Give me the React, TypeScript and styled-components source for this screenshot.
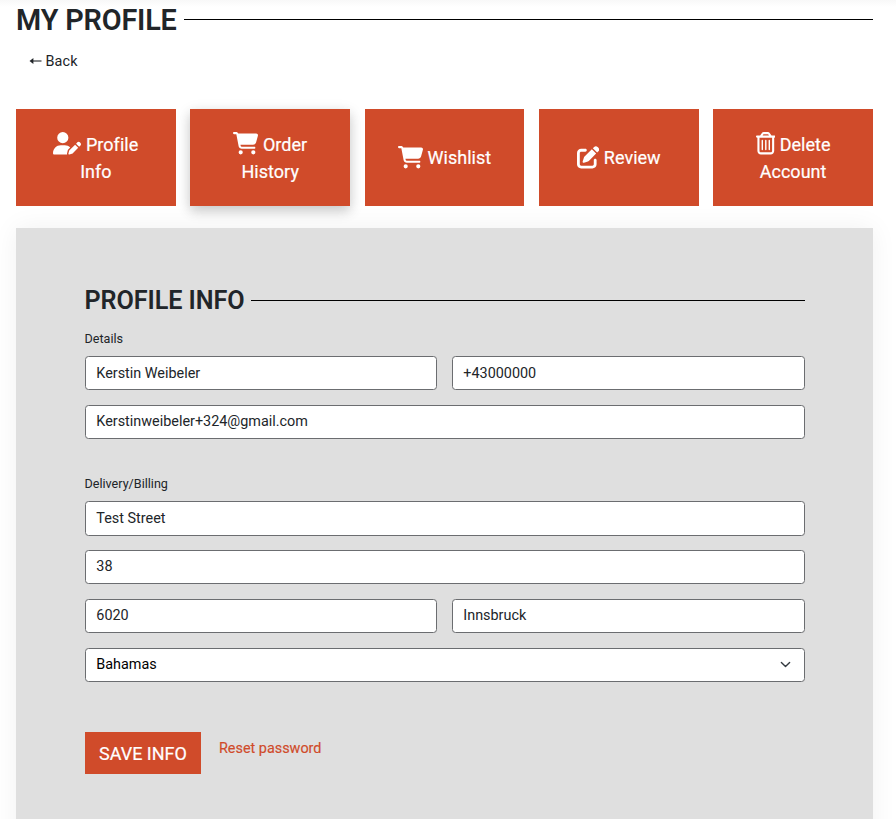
import React from "react";
import styled, { createGlobalStyle, css } from "styled-components";
import {
  FaUserPen,
  FaCartShopping,
  FaPenToSquare,
  FaRegTrashCan,
} from "react-icons/fa6";

const GlobalStyle = createGlobalStyle`
  *, *::before, *::after { box-sizing: border-box; }
  body {
    margin: 0;
    height: 819px;
    overflow: hidden;
    background: #fff;
    color: #212529;
    font-family: Roboto, "Liberation Sans", sans-serif;
    font-size: 14.4px;
    line-height: 1.5;
  }
`;

const Page = styled.main`
  height: 819px;
  padding: 0 23px 0 16px;
  overflow: hidden;
  background: linear-gradient(#f8f8f8, #fff 7px);
`;

const Heading = styled.div<{ $large?: boolean }>`
  display: flex;
  align-items: center;
  gap: 7px;
  height: ${(p) => (p.$large ? 39 : 38)}px;

  &::after {
    content: "";
    flex: 1;
    height: 1px;
    background: #000;
  }
`;

const Title = styled.h1`
  margin: 0;
  padding-top: 2px;
  width: 161px;
  font-size: 28.8px;
  font-weight: 600;
  line-height: 39px;
  letter-spacing: -0.15px;
  white-space: nowrap;
`;

const Subtitle = styled.h2`
  margin: 0 0 0 -0.5px;
  padding-top: 2px;
  width: 159.5px;
  font-size: 25.2px;
  font-weight: 600;
  line-height: 38px;
  letter-spacing: -0.08px;
  white-space: nowrap;
`;

const BackLink = styled.a`
  display: flex;
  align-items: center;
  gap: 4px;
  width: max-content;
  height: 22px;
  margin: 12px 0 36px 12.5px;
  color: #212529;
  letter-spacing: 0.1px;
  cursor: pointer;

  svg {
    display: block;
    margin-bottom: 2px;
  }
`;

const Tabs = styled.nav`
  display: grid;
  grid-template-columns: repeat(5, 1fr);
  gap: 14.5px;
  height: 97px;
`;

const Tab = styled.button<{
  $raised?: boolean;
  $iconWidth: number;
  $iconDrop: number;
}>`
  padding: 0 30px;
  border: 0;
  background: #d04b2a;
  color: #fff;
  font: 400 18px/27px Roboto, sans-serif;
  letter-spacing: 0.03px;
  -webkit-text-stroke: 0.2px #fff;
  text-align: center;
  cursor: pointer;
  ${(p) =>
    p.$raised &&
    css`
      box-shadow: 0 5px 11px rgba(0, 0, 0, 0.14), 0 4px 15px rgba(0, 0, 0, 0.1);
    `}

  svg {
    height: 22.5px;
    width: ${(p) => p.$iconWidth}px;
    vertical-align: ${(p) => -p.$iconDrop}px;
  }
`;

const Panel = styled.section`
  height: 620px;
  margin-top: 22px;
  padding: 53px 68px 0 69px;
  background: #dfdfdf;
  box-shadow: 0 0 25px rgba(0, 0, 0, 0.06);
`;

const GroupLabel = styled.div<{ $offset: number }>`
  height: 19px;
  margin: ${(p) => p.$offset}px 0 8px -0.5px;
  font-size: 12.6px;
  line-height: 19px;
`;

const Fields = styled.div`
  display: grid;
  grid-template-columns: 352px 353px;
  gap: 14.4px 15px;
`;

const fieldBox = css`
  width: 100%;
  height: 34.4px;
  padding: 0 10.3px;
  border: 1px solid #6b6d70;
  border-radius: 3.5px;
  background: #fff;
  font: 400 14.4px/20px Roboto, sans-serif;
  outline: none;
`;

const Input = styled.input<{ $wide?: boolean; $lift?: boolean }>`
  ${fieldBox}
  padding-bottom: ${(p) => (p.$lift ? 1 : 0)}px;
  color: #212529;
  grid-column: ${(p) => (p.$wide ? "1 / -1" : "auto")};
`;

const SelectField = styled.button`
  ${fieldBox}
  display: flex;
  align-items: center;
  justify-content: space-between;
  grid-column: 1 / -1;
  padding-right: 13.5px;
  color: #000;
  text-align: left;
`;

const Actions = styled.div`
  display: flex;
  align-items: flex-start;
  gap: 18px;
  margin-top: 50px;
`;

const SaveButton = styled.button`
  width: 116px;
  height: 42px;
  padding: 1px 0 0;
  border: 0;
  background: #d04b2a;
  color: #fff;
  font: 400 18px/42px Roboto, sans-serif;
  -webkit-text-stroke: 0.2px #fff;
  white-space: nowrap;
`;

const ResetLink = styled.a`
  margin-top: 6px;
  color: #d04b2a;
  line-height: 22px;
  -webkit-text-stroke: 0.15px #d04b2a;
  cursor: pointer;
`;

const tabs = [
  { label: "Profile Info", Icon: FaUserPen, iconWidth: 28, iconDrop: 4.2 },
  {
    label: "Order History",
    Icon: FaCartShopping,
    iconWidth: 25.2,
    iconDrop: 4.2,
    raised: true,
  },
  { label: "Wishlist", Icon: FaCartShopping, iconWidth: 25.2, iconDrop: 4.6 },
  { label: "Review", Icon: FaPenToSquare, iconWidth: 22.4, iconDrop: 4.6 },
  { label: "Delete Account", Icon: FaRegTrashCan, iconWidth: 19.6, iconDrop: 4.2 },
];

export default function App() {
  return (
    <>
      <GlobalStyle />
      <Page>
        <Heading $large>
          <Title>MY PROFILE</Title>
        </Heading>
        <BackLink>
          <svg width="13" height="8" viewBox="0 0 13 8">
            <path d="M2 4H12.5" stroke="#212529" strokeWidth="1.1" />
            <path d="M0.5 4L4.4 1V7Z" fill="#212529" />
          </svg>
          Back
        </BackLink>
        <Tabs>
          {tabs.map(({ label, Icon, iconWidth, iconDrop, raised }) => (
            <Tab
              key={label}
              $raised={raised}
              $iconWidth={iconWidth}
              $iconDrop={iconDrop}
            >
              <Icon /> {label}
            </Tab>
          ))}
        </Tabs>
        <Panel>
          <Heading>
            <Subtitle>PROFILE INFO</Subtitle>
          </Heading>
          <GroupLabel $offset={10}>Details</GroupLabel>
          <Fields>
            <Input defaultValue="Kerstin Weibeler" />
            <Input defaultValue="+43000000" />
            <Input $wide defaultValue="Kerstinweibeler+324@gmail.com" />
          </Fields>
          <GroupLabel $offset={35}>Delivery/Billing</GroupLabel>
          <Fields>
            <Input $wide defaultValue="Test Street" />
            <Input $wide $lift defaultValue="38" />
            <Input defaultValue="6020" />
            <Input defaultValue="Innsbruck" />
            <SelectField>
              Bahamas
              <svg width="11" height="11" viewBox="0 0 16 16" fill="none">
                <path
                  d="m2 5 6 6 6-6"
                  stroke="#343a40"
                  strokeWidth="2"
                  strokeLinecap="round"
                  strokeLinejoin="round"
                />
              </svg>
            </SelectField>
          </Fields>
          <Actions>
            <SaveButton>SAVE INFO</SaveButton>
            <ResetLink>Reset password</ResetLink>
          </Actions>
        </Panel>
      </Page>
    </>
  );
}
